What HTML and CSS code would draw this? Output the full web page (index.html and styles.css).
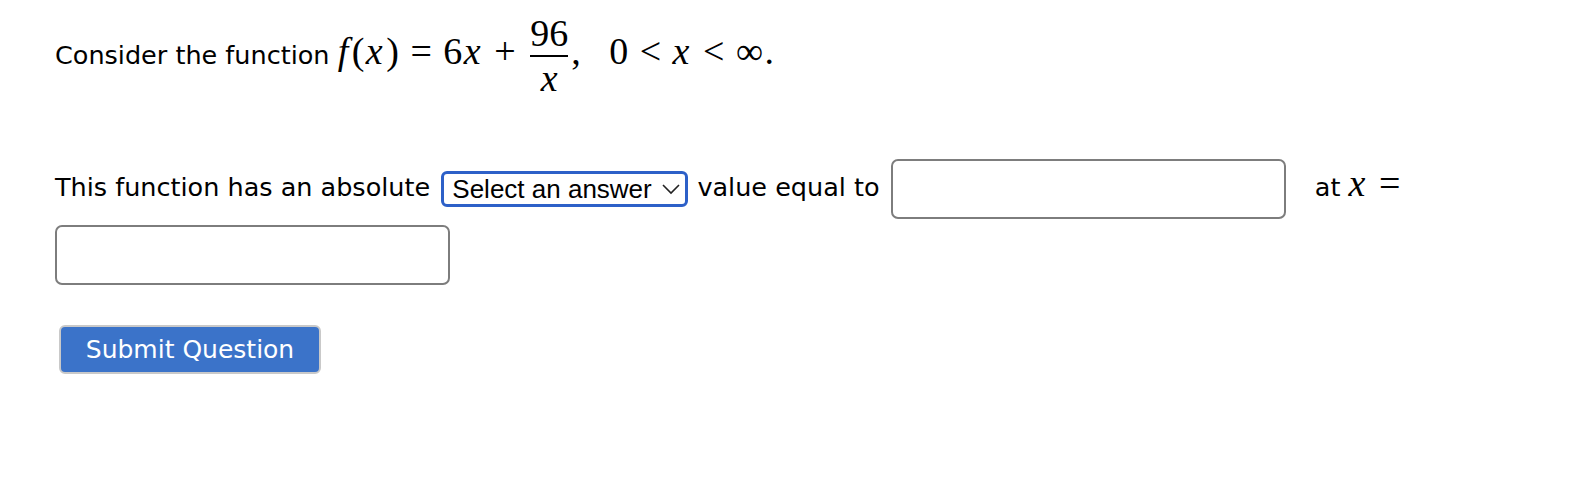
FILE: index.html
```html
<!DOCTYPE html>
<html>
<head>
<meta charset="utf-8">
<link rel="stylesheet" href="styles.css">
</head>
<body>
<div class="question">
  <p class="intro">Consider the function <span class="math"><i>f</i>(<i>x</i>)<span class="rel">=</span>6<i>x</i><span class="bin">+</span><span class="frac"><span class="num">96</span><span class="bar"></span><span class="den"><i>x</i></span></span>,<span class="qquad"></span>0<span class="rel">&lt;</span><i>x</i><span class="rel">&lt;</span>∞.</span></p>
  <p class="answer">This function has an absolute <span class="selectwrap"><select class="choice"><option>Select an answer</option><option>maximum</option><option>minimum</option></select><svg class="chev" width="20" height="12" viewBox="0 0 20 12"><path d="M2 2 L10 10 L18 2" fill="none" stroke="#222" stroke-width="1.6"/></svg></span> value equal to <input class="field" type="text"> <span class="after">at <span class="math"><i>x</i><span class="rel">=</span></span></span> <input class="field last" type="text"></p>
  <button class="submit">Submit Question</button>
</div>
</body>
</html>
```
FILE: styles.css
```css
body {
  margin: 0;
  background: #ffffff;
  color: #000000;
  font-family: "DejaVu Sans", Verdana, sans-serif;
  font-size: 25.5px;
}
.question {
  padding: 11px 0 0 55px;
}
.intro {
  margin: 0;
  line-height: 80px;
}
.math {
  font-family: "Liberation Serif", "Times New Roman", serif;
  font-size: 38px;
  letter-spacing: 1.5px;
  white-space: nowrap;
}
.math i {
  font-style: italic;
  margin-right: 2px;
}
.rel {
  padding: 0 10px;
}
.bin {
  padding: 0 10px;
}
.qquad {
  display: inline-block;
  width: 27px;
}
.frac {
  display: inline-flex;
  flex-direction: column;
  align-items: center;
  vertical-align: middle;
  line-height: 1;
  margin: 0 3px 0 3px;
  letter-spacing: 0;
}
.num {
  padding: 0;
}
.den i {
  margin-right: 0;
}
.bar {
  align-self: stretch;
  height: 2px;
  background: #000;
  margin: 3px 0 2px;
}
.answer {
  margin: 53px 0 0 0;
  line-height: 66px;
}
.selectwrap {
  position: relative;
  display: inline-block;
  vertical-align: middle;
  margin-left: 3px;
}
.choice {
  appearance: none;
  -webkit-appearance: none;
  font-family: "Liberation Sans", Arial, sans-serif;
  font-size: 26px;
  color: #000;
  background: #fff;
  width: 247px;
  height: 36px;
  border: 3px solid #2d60c8;
  border-radius: 6px;
  padding: 0 0 0 8px;
  margin: 0 1px 0 0;
  display: block;
}
.chev {
  position: absolute;
  right: 8px;
  top: 12px;
}
.field {
  width: 395px;
  height: 60px;
  box-sizing: border-box;
  border: 2px solid #7d7d7d;
  border-radius: 7px;
  vertical-align: middle;
  margin: 0 3px;
}
.after {
  margin-left: 18px;
  white-space: nowrap;
}
.field.last {
  margin: 0;
}
.submit {
  display: block;
  margin: 39px 0 0 4px;
  width: 262px;
  height: 49px;
  background: #3b73c9;
  color: #fff;
  border: 2px solid #c9c9c9;
  border-radius: 6px;
  font-family: "DejaVu Sans", Verdana, sans-serif;
  font-size: 25px;
  padding: 0;
}
```
